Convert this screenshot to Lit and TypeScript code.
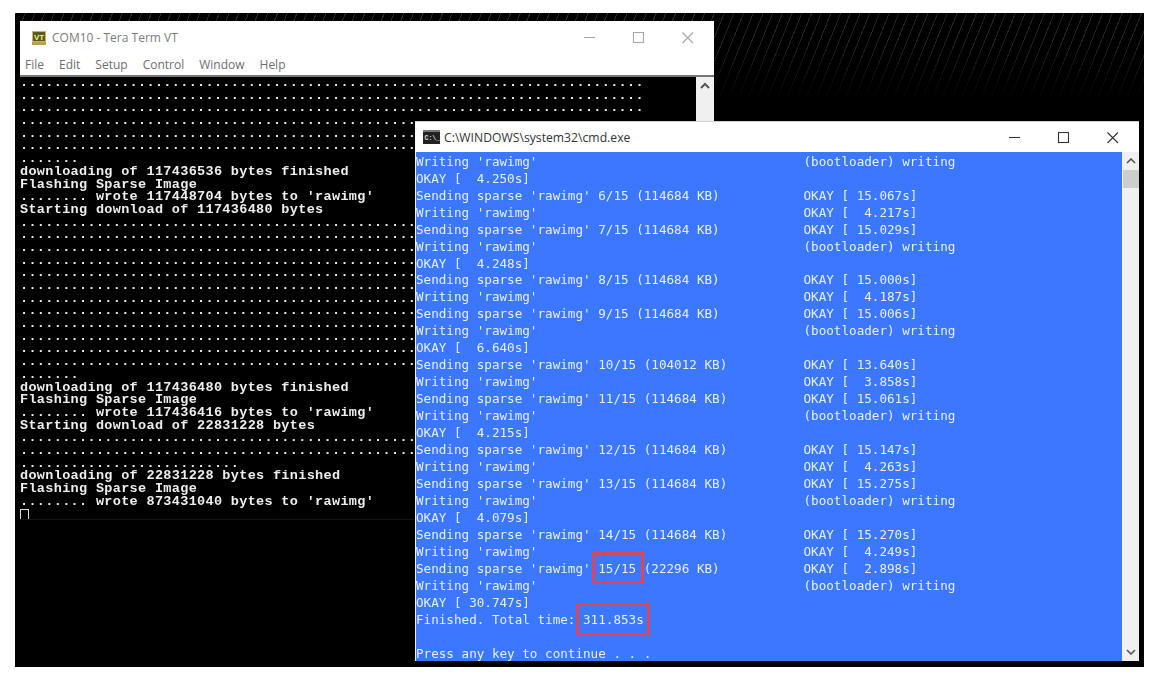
import { LitElement, html, css } from "lit";
import { customElement } from "lit/decorators.js";

const d74 = ".".repeat(74);
const left: string[] = [
  d74, d74, d74, d74, d74, d74, ".......",
  "downloading of 117436536 bytes finished",
  "Flashing Sparse Image",
  "........ wrote 117448704 bytes to 'rawimg'",
  "Starting download of 117436480 bytes",
  ...Array(12).fill(d74), ".......",
  "downloading of 117436480 bytes finished",
  "Flashing Sparse Image",
  "........ wrote 117436416 bytes to 'rawimg'",
  "Starting download of 22831228 bytes",
  d74, d74, ".".repeat(26),
  "downloading of 22831228 bytes finished",
  "Flashing Sparse Image",
  "........ wrote 873431040 bytes to 'rawimg'",
];

const right: [string, string][] = [
  ["Writing 'rawimg'", "(bootloader) writing"],
  ["OKAY [  4.250s]", ""],
  ["Sending sparse 'rawimg' 6/15 (114684 KB)", "OKAY [ 15.067s]"],
  ["Writing 'rawimg'", "OKAY [  4.217s]"],
  ["Sending sparse 'rawimg' 7/15 (114684 KB)", "OKAY [ 15.029s]"],
  ["Writing 'rawimg'", "(bootloader) writing"],
  ["OKAY [  4.248s]", ""],
  ["Sending sparse 'rawimg' 8/15 (114684 KB)", "OKAY [ 15.000s]"],
  ["Writing 'rawimg'", "OKAY [  4.187s]"],
  ["Sending sparse 'rawimg' 9/15 (114684 KB)", "OKAY [ 15.006s]"],
  ["Writing 'rawimg'", "(bootloader) writing"],
  ["OKAY [  6.640s]", ""],
  ["Sending sparse 'rawimg' 10/15 (104012 KB)", "OKAY [ 13.640s]"],
  ["Writing 'rawimg'", "OKAY [  3.858s]"],
  ["Sending sparse 'rawimg' 11/15 (114684 KB)", "OKAY [ 15.061s]"],
  ["Writing 'rawimg'", "(bootloader) writing"],
  ["OKAY [  4.215s]", ""],
  ["Sending sparse 'rawimg' 12/15 (114684 KB)", "OKAY [ 15.147s]"],
  ["Writing 'rawimg'", "OKAY [  4.263s]"],
  ["Sending sparse 'rawimg' 13/15 (114684 KB)", "OKAY [ 15.275s]"],
  ["Writing 'rawimg'", "(bootloader) writing"],
  ["OKAY [  4.079s]", ""],
  ["Sending sparse 'rawimg' 14/15 (114684 KB)", "OKAY [ 15.270s]"],
  ["Writing 'rawimg'", "OKAY [  4.249s]"],
  ["Sending sparse 'rawimg' 15/15 (22296 KB)", "OKAY [  2.898s]"],
  ["Writing 'rawimg'", "(bootloader) writing"],
  ["OKAY [ 30.747s]", ""],
  ["Finished. Total time: 311.853s", ""],
  ["\u00a0", ""],
  ["Press any key to continue . . .", ""],
];

const winButtons = (cls: string) => html`<svg class=${cls} viewBox="0 0 112 14" fill="none" stroke="currentColor" stroke-width="1.1">
  <path d="M0 5.5H11"/><rect x="49.5" y="0.5" width="10" height="10"/><path d="M98.5 0.5l10.5 10.5M109 0.5l-10.5 10.5"/>
</svg>`;

@customElement("app-root")
export class AppRoot extends LitElement {
  static styles = css`
    :host { display: block; width: 1149px; height: 679px; background: #fff; overflow: hidden; }
    .desk { position: relative; width: 1129px; height: 654px; margin: 13px 0 0 15px; background: #000; overflow: hidden; }
    .hatch { position: absolute; left: 699px; top: 0; right: 0; height: 90px;
      background: repeating-linear-gradient(112deg, #222 0 1px, transparent 1px 9px);
      -webkit-mask-image: linear-gradient(#000 30%, transparent); mask-image: linear-gradient(#000 30%, transparent); }
    .hatch2 { position: absolute; left: 0; top: 0; width: 699px; height: 8px;
      background: repeating-linear-gradient(112deg, #2a2a2a 0 1px, transparent 1px 9px); }
    .tera { position: absolute; left: 5px; top: 8px; width: 694px; }
    .tera-title { height: 33px; background: #fff; display: flex; align-items: center; padding-left: 12px; gap: 6px; color: #7b7b7b;
      font: 12px "Open Sans", sans-serif; position: relative; }
    .tera-title .btns { position: absolute; left: 564px; top: 11px; width: 112px; height: 14px; color: #a6a6a6; }
    .tera-menu { height: 21px; background: #fff; display: flex; align-items: center; padding-left: 5px; gap: 15px; color: #6e6e6e;
      font: 12px "Open Sans", sans-serif; border-bottom: 2px solid #777; }
    .term { position: relative; background: #000; box-sizing: border-box; height: 443px; padding-top: 1px; color: #eee; border-bottom: 1px solid #161616;
      font: bold 13.5px/12.7px "Liberation Mono", monospace; letter-spacing: 0.33px; white-space: pre; filter: blur(0.3px); overflow: hidden; }
    .term div { height: 12.7px; margin-top: 0; }
    .term div:first-child { margin-top: -1px; }
    .cursor { display: block; width: 9px; height: 12px; border: 1px solid #ddd; box-sizing: border-box; margin-top: 1px; }
    .tera-sb { position: absolute; right: 0; top: 56px; width: 18px; height: 46px; background: #f0f0f0; display: flex; justify-content: center; padding-top: 5px; box-sizing: border-box; }
    .cmd { position: absolute; left: 400px; top: 108px; width: 724px; height: 540px; background: #f0f0f0; display: flex; flex-direction: column; }
    .cmd-title { height: 31px; flex: none; background: #fff; display: flex; align-items: center; padding-left: 8px; gap: 4px; color: #333;
      font: 12.2px "Open Sans", sans-serif; position: relative; border-top: 1px solid #ccc; box-sizing: border-box; }
    .cmd-title .btns { position: absolute; left: 594px; top: 10px; width: 112px; height: 14px; color: #333; }
    .cmd-body { flex: 1; display: flex; padding-left: 1px; min-height: 0; }
    .con { flex: 1; background: #3b78ff; color: #e6eeff; font: 12.62px/16.97px "DejaVu Sans Mono", monospace; white-space: pre; overflow: hidden; position: relative; filter: blur(0.25px); padding-top: 1.7px; }
    .row { display: grid; grid-template-columns: 387.5px 1fr; height: 16.97px; }
    .sb { width: 17px; flex: none; background: #f0f0f0; display: flex; flex-direction: column; align-items: center; }
    .sb .up { height: 18px; display: flex; align-items: center; }
    .sb .thumb { width: 16px; height: 18px; background: #cdcdcd; }
    .sb .down { height: 18px; margin-top: auto; display: flex; align-items: center; }
    .mark { position: absolute; border: 3px solid #d8475a; box-sizing: border-box; }
    .m1 { left: 577px; top: 539px; width: 52px; height: 32px; }
    .m2 { left: 561px; top: 590px; width: 74px; height: 33px; }
  `;

  render() {
    return html`<div class="desk">
      <div class="hatch"></div><div class="hatch2"></div>
      <section class="tera">
        <header class="tera-title">
          <svg width="14" height="14" viewBox="0 0 14 14"><rect width="14" height="14" fill="#c9b56a"/><rect x="1" y="1" width="12" height="9" fill="#5c5a1e"/><rect y="11" width="14" height="3" fill="#b9a24e"/><text x="7" y="8.6" font-size="8" font-weight="700" text-anchor="middle" fill="#f3e9a0" font-family="Liberation Sans">VT</text></svg>
          <span>COM10 - Tera Term VT</span>
          ${winButtons("btns")}
        </header>
        <nav class="tera-menu"><span>File</span><span>Edit</span><span>Setup</span><span>Control</span><span>Window</span><span>Help</span></nav>
        <div class="term">${left.map((l) => html`<div>${l}</div>`)}<span class="cursor"></span></div>
        <div class="tera-sb"><svg width="10" height="7" viewBox="0 0 10 7" fill="none" stroke="#555" stroke-width="2"><path d="M1 6l4-4 4 4"/></svg></div>
      </section>
      <section class="cmd">
        <header class="cmd-title">
          <svg width="17" height="14" viewBox="0 0 17 14"><rect width="17" height="14" fill="#222"/><rect y="0" width="17" height="2" fill="#777"/><text x="1.5" y="10" font-size="6.5" font-weight="700" fill="#ddd" font-family="Liberation Mono">C:\\_</text></svg>
          <span>C:\\WINDOWS\\system32\\cmd.exe</span>
          ${winButtons("btns")}
        </header>
        <div class="cmd-body">
          <div class="con">${right.map((r) => html`<div class="row"><span>${r[0]}</span><span>${r[1]}</span></div>`)}</div>
          <div class="sb">
            <div class="up"><svg width="10" height="6" viewBox="0 0 10 6" fill="none" stroke="#555" stroke-width="1.6"><path d="M1 5l4-4 4 4"/></svg></div>
            <div class="thumb"></div>
            <div class="down"><svg width="10" height="6" viewBox="0 0 10 6" fill="none" stroke="#555" stroke-width="1.6"><path d="M1 1l4 4 4-4"/></svg></div>
          </div>
        </div>
      </section>
      <div class="mark m1"></div><div class="mark m2"></div>
    </div>`;
  }
}
